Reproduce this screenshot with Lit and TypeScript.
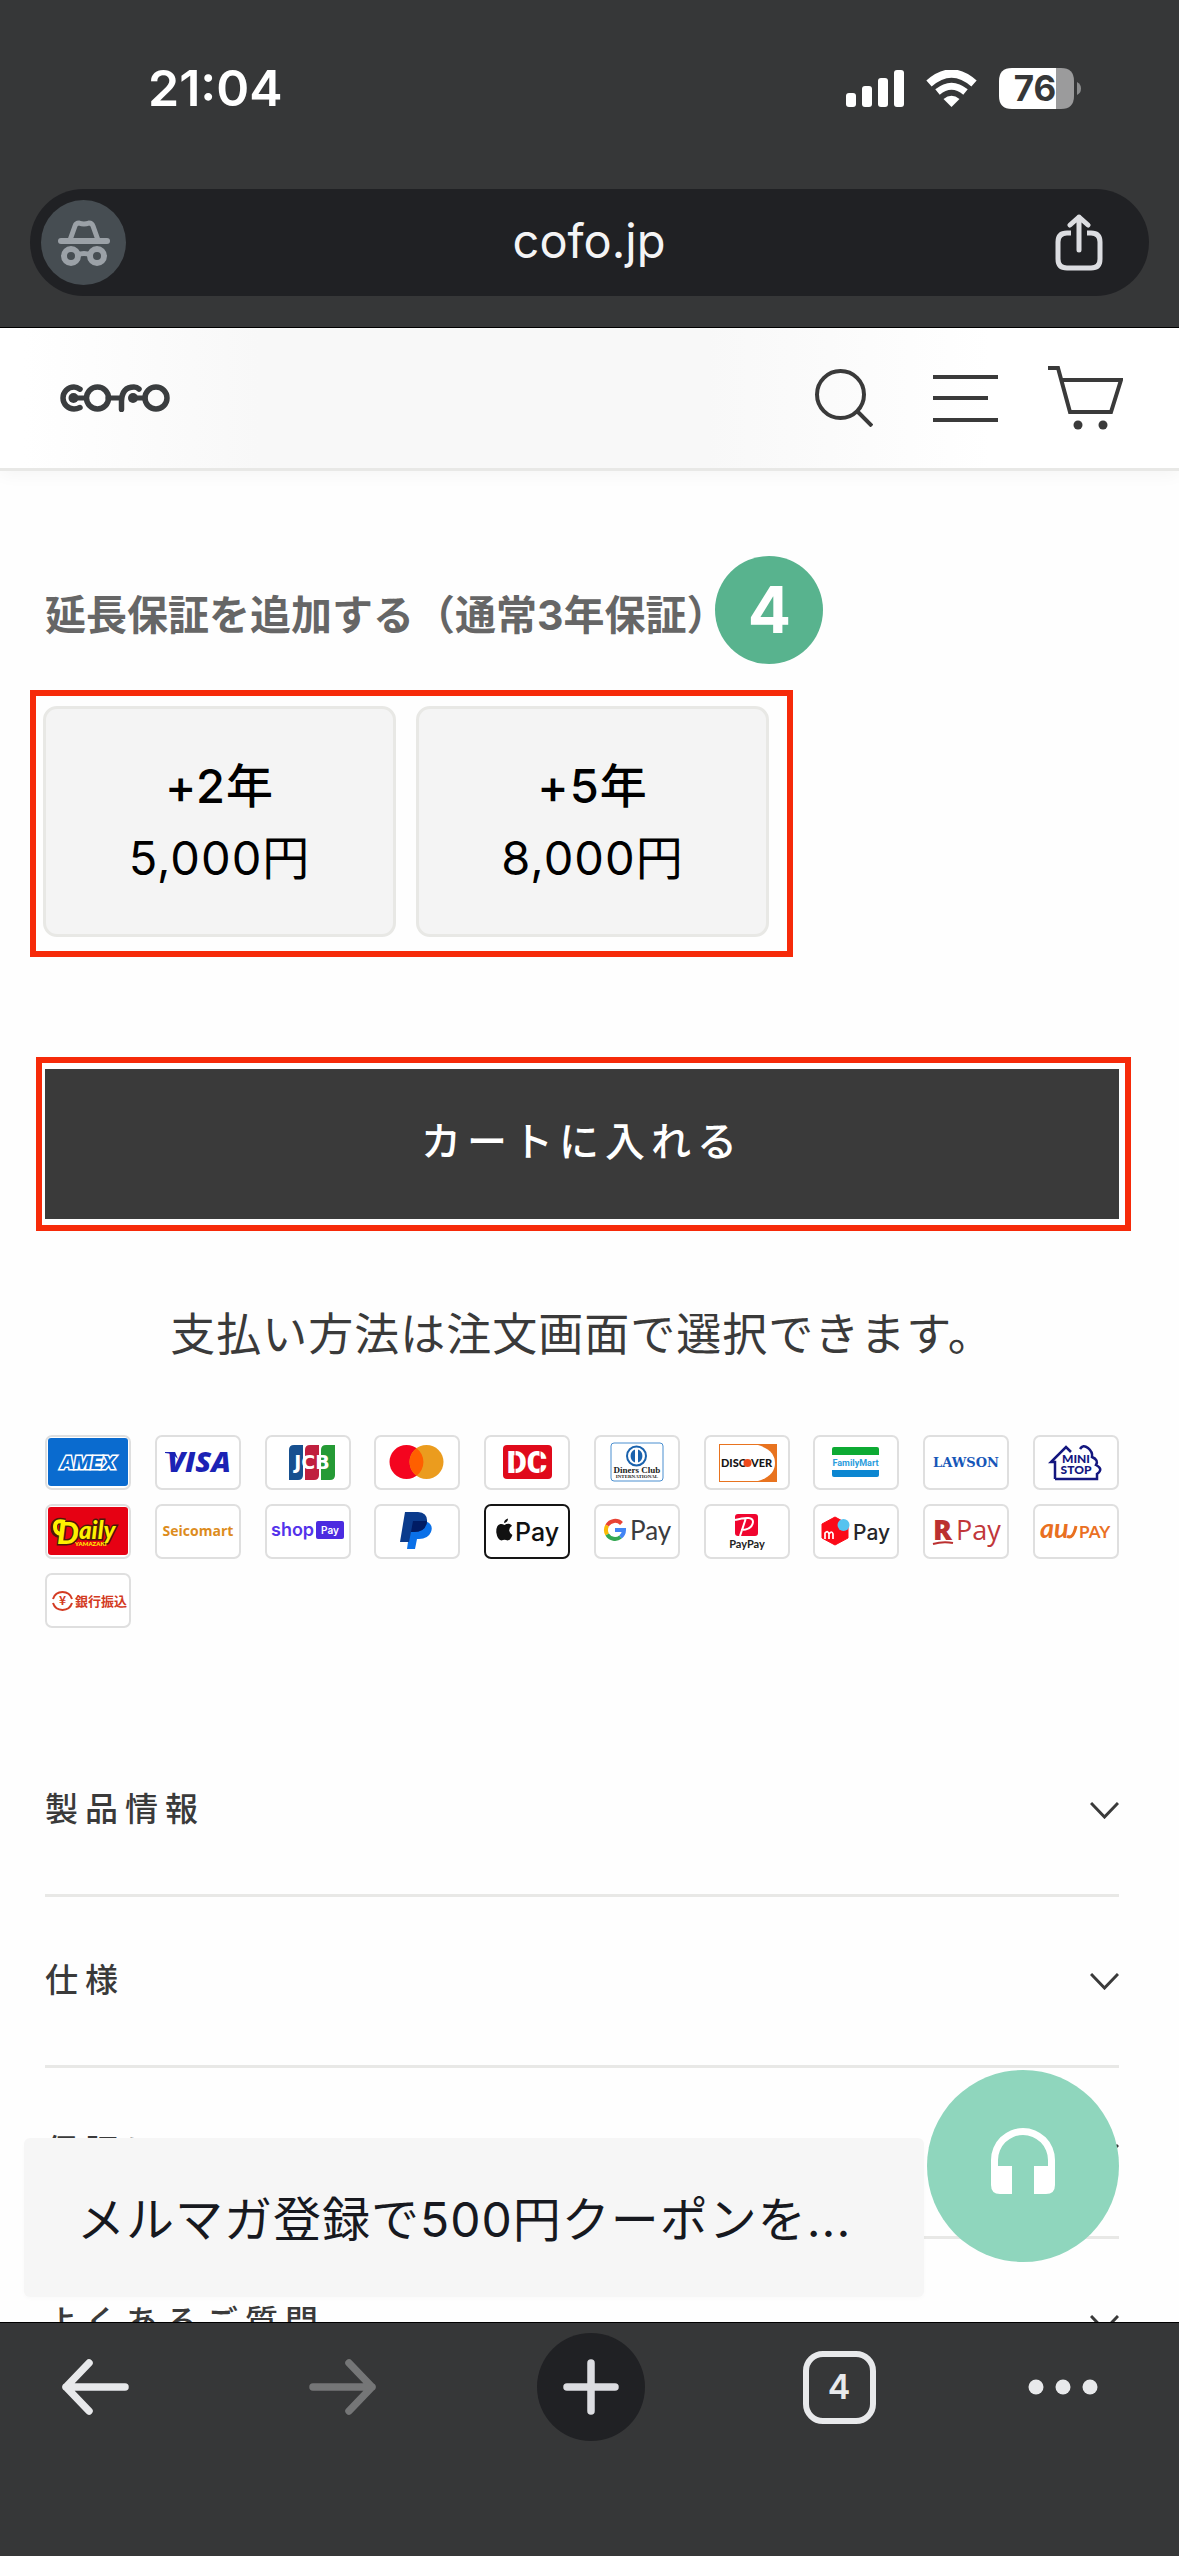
import { LitElement, html, css, svg } from "lit";
import { customElement, property, state } from "lit/decorators.js";
import { classMap } from "lit/directives/class-map.js";

const sans = css`Inter, "Noto Sans CJK JP", sans-serif`;

const logos: { name: string; dark?: boolean; art: unknown }[] = [
  {
    name: "AMEX",
    art: svg`<rect x="3" y="3" width="80" height="48" rx="3" fill="#0a6bcf"/>
      <text x="43" y="34" text-anchor="middle" font-family="Inter" font-weight="800" font-style="italic" font-size="18" fill="#0a6bcf" stroke="#fff" stroke-width="3" paint-order="stroke">AMEX</text>`,
  },
  {
    name: "VISA",
    art: svg`<path d="M10 17H20L23 24Q18 18 10 18Z" fill="#1b22b5"/>
      <text x="44" y="37" text-anchor="middle" font-family="Open Sans" font-weight="800" font-style="italic" font-size="29" fill="#1b22b5">VISA</text>`,
  },
  {
    name: "JCB",
    art: svg`<path d="M29 10H38V40Q38 45 33 45H24V15Q24 10 29 10Z" fill="#17508f"/>
      <path d="M45 10H54V40Q54 45 49 45H40V15Q40 10 45 10Z" fill="#c0203f"/>
      <path d="M61 10H70V40Q70 45 65 45H56V15Q56 10 61 10Z" fill="#259a35"/>
      <text x="47" y="34" text-anchor="middle" font-family="DejaVu Sans" font-weight="700" font-size="19" fill="#fff">JCB</text>`,
  },
  {
    name: "Mastercard",
    art: svg`<circle cx="32.500" cy="27" r="17" fill="#f4041f"/><circle cx="52.500" cy="27" r="17" fill="#eb9c1e"/>
      <path d="M42.500 13.300a17 17 0 0 1 0 27.400a17 17 0 0 1 0-27.400Z" fill="#ff5f00"/>`,
  },
  {
    name: "DC",
    art: svg`<rect x="19" y="10" width="49" height="34" rx="4" fill="#e00a1b"/>
      <text x="43" y="38" text-anchor="middle" font-family="Roboto" font-weight="900" font-size="31" fill="#fff">DC</text>
      <path d="M31 15V39M56 15V39" stroke="#e00a1b" stroke-width="1"/>`,
  },
  {
    name: "Diners Club",
    art: svg`<rect x="17" y="8" width="52" height="38" rx="3" fill="#fff" stroke="#4a8fd0"/>
      <circle cx="42.500" cy="21" r="9.500" fill="#fff" stroke="#1a62ad" stroke-width="2"/>
      <path d="M41 14.500a7 7 0 0 0 0 13ZM44 14.500a7 7 0 0 1 0 13Z" fill="#1a62ad"/>
      <text x="43" y="38" text-anchor="middle" font-family="Liberation Serif" font-weight="700" font-size="9" fill="#222">Diners Club</text>
      <text x="43" y="43" text-anchor="middle" font-family="Liberation Serif" font-weight="700" font-size="5" fill="#222">INTERNATIONAL</text>`,
  },
  {
    name: "DISCOVER",
    art: svg`<rect x="15" y="9" width="58" height="38" fill="#e8731f"/>
      <path d="M16 10H54Q71 15 71 28Q71 41 54 46H16Z" fill="#fff"/>
      <text x="17" y="32" font-family="Lato" font-weight="900" font-size="11" fill="#151515">DISC</text>
      <circle cx="43.500" cy="28" r="4" fill="#ee4a1c"/>
      <text x="47" y="32" font-family="Lato" font-weight="900" font-size="11" fill="#151515">VER</text>`,
  },
  {
    name: "FamilyMart",
    art: svg`<path d="M19 20V14Q19 12 21 12H64Q66 12 66 14V20Z" fill="#0daa33"/>
      <path d="M19 35H66V40Q66 42 64 42H21Q19 42 19 40Z" fill="#0b86d1"/>
      <text x="42.500" y="31" text-anchor="middle" font-family="Roboto" font-weight="700" font-size="9" fill="#2a9ddc">FamilyMart</text>`,
  },
  {
    name: "LAWSON",
    art: svg`<text x="43" y="32" text-anchor="middle" font-family="DejaVu Serif" font-weight="700" font-size="13" fill="#1656b8">LAWSON</text>`,
  },
  {
    name: "MINISTOP",
    art: svg`<path d="M22 44V27H18L33 12L38 17M47 14Q50 9 55 13Q60 17 59 22Q66 25 63 30Q71 34 64 39V44H22" fill="none" stroke="#14177f" stroke-width="2.500"/>
      <text x="43" y="28" text-anchor="middle" font-family="Lato" font-weight="900" font-size="12" fill="#14177f">MINI</text>
      <text x="43" y="39" text-anchor="middle" font-family="Lato" font-weight="900" font-size="12" fill="#14177f">STOP</text>`,
  },
  {
    name: "Daily",
    art: svg`<rect x="3" y="3" width="80" height="48" rx="3" fill="#e60113"/>
      <path d="M20 18Q9 15 9 24Q9 30 16 31" fill="none" stroke="#4b1a08" stroke-width="7"/>
      <text x="12" y="40" font-family="Lato" font-weight="900" font-style="italic" font-size="31" fill="#fff100" stroke="#4b1a08" stroke-width="3" paint-order="stroke">D</text>
      <path d="M20 18Q10 15 10 23Q10 29 16 30" fill="none" stroke="#fff100" stroke-width="4"/>
      <text x="34" y="35" font-family="Lato" font-weight="900" font-style="italic" font-size="24" fill="#fff100" stroke="#4b1a08" stroke-width="3" paint-order="stroke">aily</text>
      <text x="30" y="42" font-family="Lato" font-weight="900" font-size="6" fill="#fff100">YAMAZAKI</text>`,
  },
  {
    name: "Seicomart",
    art: svg`<text x="43" y="32" text-anchor="middle" font-family="Open Sans" font-weight="700" font-size="14" fill="#dd8c1d">Seicomart</text>`,
  },
  {
    name: "shop Pay",
    art: svg`<text x="6" y="32" font-family="Inter" font-weight="600" font-size="18" fill="#5433eb">shop</text>
      <rect x="51" y="17" width="28" height="18" rx="2" fill="#4b2be0"/>
      <text x="65" y="30" text-anchor="middle" font-family="Inter" font-weight="600" font-size="10" fill="#fff">Pay</text>`,
  },
  {
    name: "PayPal",
    art: svg`<path d="M37 17H51Q60 20 57 28Q54 35 45 35H43L41 45H33Z" fill="#0a70e8"/>
      <path d="M31 8H44Q54 9 53 18Q51 28 40 28H37L35 38H26Z" fill="#0b3b8c"/>
      <path d="M39 17H53Q52 28 40 28H37Z" fill="#001c64"/>`,
  },
  {
    name: "Apple Pay",
    dark: true,
    art: svg`<path d="M20.500 21Q22.500 19.600 25 19.800Q27 20.200 28 21.800Q25 23.600 25.200 26.500Q25.500 29.600 28.400 31Q26.600 36.300 23.600 36.500Q22 35.700 20.500 35.700Q19 35.700 17.400 36.500Q13.500 36 12.300 28.500Q12 21 16.500 20Q18.500 19.800 20.500 21ZM20 19Q20 15.500 24 14.500Q24.200 18.300 20 19Z" fill="#111"/>
      <text x="31" y="37" font-family="Inter" font-weight="500" font-size="25" fill="#111">Pay</text>`,
  },
  {
    name: "G Pay",
    art: svg`<g fill="none" stroke-width="4"><path d="M27.500 19.500A9 9 0 0 0 13.200 21.500" stroke="#e84335"/><path d="M13.200 21.500A9 9 0 0 0 13.200 30.500" stroke="#fabb05"/>
      <path d="M13.200 30.500A9 9 0 0 0 26.500 33" stroke="#34a853"/><path d="M26.500 33A9 9 0 0 0 30 26H21" stroke="#4285f4"/></g>
      <text x="36" y="36" font-family="Lato" font-weight="400" font-size="26" fill="#3a3c40">Pay</text>`,
  },
  {
    name: "PayPay",
    art: svg`<rect x="31" y="10" width="23" height="22" rx="3" fill="#f0052f"/>
      <path d="M31 16Q49 11 49 18Q48 26 37 26M42 14L36 32" fill="none" stroke="#fff" stroke-width="2"/>
      <text x="43" y="44" text-anchor="middle" font-family="Lato" font-weight="700" font-size="11" fill="#222">PayPay</text>`,
  },
  {
    name: "Mer Pay",
    art: svg`<path d="M22 13L35 20V34L22 41L9 34V20Z" fill="#fb0a18" stroke="#fb0a18" stroke-linejoin="round"/>
      <circle cx="30.500" cy="21" r="6" fill="#55c3ef"/>
      <path d="M12 35V29Q15 26 16 30V35M16 30Q19 26 20 30V35" fill="none" stroke="#fff" stroke-width="1.700"/>
      <text x="40" y="36" font-family="Inter" font-weight="500" font-size="21" fill="#26272b">Pay</text>`,
  },
  {
    name: "R Pay",
    art: svg`<text x="10" y="36" font-family="Open Sans" font-weight="800" font-size="28" fill="#bb3030">R</text>
      <path d="M10 40Q20 37 30 39" fill="none" stroke="#bb3030" stroke-width="2"/>
      <text x="33" y="36" font-family="Open Sans" font-weight="400" font-size="27" fill="#c1373a">Pay</text>`,
  },
  {
    name: "au PAY",
    art: svg`<text x="7" y="34" font-family="Lato" font-weight="700" font-style="italic" font-size="27" fill="#e9701f">au</text>
      <path d="M34 32Q40 36 43 22" fill="none" stroke="#e9701f" stroke-width="3"/>
      <text x="46" y="34" font-family="Lato" font-weight="700" font-size="17" fill="#ea7023">PAY</text>`,
  },
  {
    name: "銀行振込",
    art: svg`<path d="M8 26A10 10 0 0 1 27 26M27 30A10 10 0 0 1 8 30" fill="none" stroke="#d33a22" stroke-width="2"/>
      <text x="17.500" y="32" text-anchor="middle" font-family="Noto Sans CJK JP" font-weight="700" font-size="12" fill="#d33a22">¥</text>
      <text x="30" y="33" font-family="Noto Sans CJK JP" font-weight="700" font-size="13" fill="#d33a22">銀行振込</text>`,
  },
];

@customElement("status-bar")
class StatusBar extends LitElement {
  static styles = css`
    :host { display: block; font-family: ${sans}; }
    .bar { display: flex; align-items: center; padding: 58px 98px 71px 148px; color: #fff; }
    .time { flex: 1; font-size: 50px; line-height: 60px; font-weight: 600; }
    .icons { display: flex; align-items: center; gap: 22px; }
    svg { display: block; }
  `;
  render() {
    return html`<div class="bar">
      <span class="time">21:04</span>
      <div class="icons">
        <svg width="58" height="37" viewBox="0 0 58 37" fill="#fff" aria-hidden="true">
          <rect y="23" width="10" height="14" rx="3" /><rect x="16" y="16" width="10" height="21" rx="3" />
          <rect x="32" y="8" width="10" height="29" rx="3" /><rect x="48" width="10" height="37" rx="3" />
        </svg>
        <svg width="51" height="37" viewBox="0 0 51 37" aria-hidden="true">
          <path d="M3 13.500Q25.500-6.500 48 13.500" fill="none" stroke="#fff" stroke-width="8" />
          <path d="M11.500 22Q25.500 10.500 39.500 22" fill="none" stroke="#fff" stroke-width="7" />
          <path d="M17.500 29Q25.500 22.500 33.500 29L25.500 37Z" fill="#fff" />
        </svg>
        <svg width="82" height="41" viewBox="0 0 82 41" role="img" aria-label="76%">
          <path d="M57 0H62Q75 0 75 13V28Q75 41 62 41H57Z" fill="#9b9b9c" />
          <path d="M13 0H57V41H13Q0 41 0 28V13Q0 0 13 0Z" fill="#fff" />
          <path d="M78 14Q82 16 82 20.500Q82 25 78 27Z" fill="#8b8c8d" />
          <text x="36" y="33" text-anchor="middle" font-family="Inter" font-size="35" font-weight="700" fill="#363738">76</text>
        </svg>
      </div>
    </div>`;
  }
}

@customElement("address-bar")
class AddressBar extends LitElement {
  static styles = css`
    :host { display: block; padding: 0 30px 31px; font-family: ${sans}; }
    .pill { display: flex; align-items: center; justify-content: space-between; padding: 11px 46px 11px 11px; border-radius: 54px; background: #202124; }
    .incognito { display: flex; align-items: center; justify-content: center; width: 85px; height: 85px; border-radius: 50%; background: #464d52; }
    .url { flex: 1; padding: 0 3px 4px 0; border: 0; background: none; color: #f4f4f5; font: 400 47px/60px ${sans}; text-align: center; min-width: 0; outline: 0; }
    .share { padding: 0; border: 0; background: none; }
    svg { display: block; }
  `;
  render() {
    return html`<div class="pill">
      <span class="incognito">
        <svg width="52" height="46" viewBox="0 0 52 46" fill="none" stroke="#9ba1a7" aria-hidden="true">
          <path d="M3 21H49" stroke-width="6" stroke-linecap="round" />
          <path d="M12 20L17 6Q18 3 21 3Q26 5 31 3Q34 3 35 6L40 20" stroke-width="5" />
          <circle cx="13" cy="36" r="7" stroke-width="6" /><circle cx="39" cy="36" r="7" stroke-width="6" />
          <path d="M19 35Q26 32 33 35" stroke-width="5" />
        </svg>
      </span>
      <input class="url" aria-label="アドレス" value="cofo.jp" />
      <button class="share" aria-label="共有">
        <svg width="48" height="57" viewBox="0 0 48 57" fill="none" stroke="#dcdde1" stroke-width="5" stroke-linecap="round" stroke-linejoin="round">
          <path d="M24 36V3M15 11L24 3L33 11" />
          <path d="M16 19H12Q3 19 3 28V45Q3 54 12 54H36Q45 54 45 45V28Q45 19 36 19H32" stroke-linecap="butt" />
        </svg>
      </button>
    </div>`;
  }
}

@customElement("shop-header")
class ShopHeader extends LitElement {
  static styles = css`
    :host { display: block; }
    .bar { display: flex; align-items: center; justify-content: space-between; height: 140px; padding: 0 56px 0 60px; border-bottom: 3px solid #e8e8e6; background: linear-gradient(90deg, #fff 2%, #f8f8f8 22%, #f8f8f8 60%, #fff 84%); box-shadow: 0 4px 16px rgba(0, 0, 0, 0.04); }
    .tools { display: flex; align-items: center; gap: 50px; }
    .tool { padding: 0; border: 0; background: none; }
    .menu { margin-left: 10px; }
    svg { display: block; }
  `;
  render() {
    return html`<header class="bar">
      <a href="#top" aria-label="COFO">
        <svg width="110" height="28" viewBox="0 0 110 28" fill="none" stroke="#3a3d3f" stroke-width="5.500" stroke-linecap="round">
          <path d="M20 5.200Q17 3 14 3A11 11 0 0 0 14 25Q17 25 20 23.500" />
          <path d="M14 14H26M48 14H60M73 14H85" stroke-width="5" />
          <path d="M61.500 25.500V17Q62 3 74 3Q77 3 79 5" />
          <circle cx="13.500" cy="14" r="5" fill="#3a3d3f" stroke="none" /><circle cx="73" cy="14" r="5" fill="#3a3d3f" stroke="none" />
          <circle cx="37.500" cy="14" r="11" /><circle cx="96" cy="14" r="11" />
        </svg>
      </a>
      <div class="tools">
        <button class="tool" aria-label="検索">
          <svg width="58" height="58" viewBox="0 0 58 58" fill="none" stroke="#3a3a3a" stroke-width="4"><circle cx="25.500" cy="25.500" r="23.500" /><path d="M42 42L57 57" /></svg>
        </button>
        <button class="tool menu" aria-label="メニュー">
          <svg width="65" height="48" viewBox="0 0 65 48" stroke="#3a3a3a" stroke-width="4"><path d="M0 3H65M0 24H55M0 46H65" /></svg>
        </button>
        <button class="tool" aria-label="カート">
          <svg width="75" height="64" viewBox="0 0 75 64" fill="none" stroke="#3a3a3a" stroke-width="4"><path d="M0 2H10L22 46H63L73 14H14" /><circle cx="30" cy="59" r="4.500" fill="#3a3a3a" stroke="none" /><circle cx="55" cy="59" r="4.500" fill="#3a3a3a" stroke="none" /></svg>
        </button>
      </div>
    </header>`;
  }
}

@customElement("payment-grid")
class PaymentGrid extends LitElement {
  static styles = css`
    :host { display: block; }
    .grid { display: grid; grid-template-columns: repeat(10, 86px); justify-content: space-between; gap: 14px 0; margin: 0; padding: 0; list-style: none; }
    .card { height: 55px; }
    .frame { fill: #fff; stroke: #dfdfdf; stroke-width: 2; }
    .dark .frame { stroke: #151515; }
    svg { display: block; }
  `;
  render() {
    return html`<ul class="grid">
      ${logos.map((l) => html`<li class=${classMap({ card: true, dark: !!l.dark })}>
        <svg width="86" height="55" viewBox="0 0 86 55" role="img" aria-label=${l.name}>
          <rect class="frame" x="1" y="1" width="84" height="53" rx="6" />${l.art}
        </svg>
      </li>`)}
    </ul>`;
  }
}

@customElement("info-row")
class InfoRow extends LitElement {
  @property() label = "";
  @state() private open = false;
  static styles = css`
    :host { display: block; border-bottom: 3px solid #e8e8e6; }
    .row { display: flex; align-items: center; justify-content: space-between; width: 100%; height: 168px; padding: 0; border: 0; background: none; color: #3a3a3a; font: 500 33px/48px ${sans}; letter-spacing: 7px; text-align: left; }
    .label { padding-bottom: 3px; }
    .open { transform: rotate(180deg); }
    svg { display: block; }
  `;
  render() {
    return html`<button class="row" aria-expanded=${this.open} @click=${() => (this.open = !this.open)}>
      <span class="label">${this.label}</span>
      <svg class=${classMap({ open: this.open })} width="29" height="17" viewBox="0 0 29 17" fill="none" stroke="#3a3a3a" stroke-width="3"><path d="M1 1L14.500 15L28 1" /></svg>
    </button>`;
  }
}

@customElement("browser-toolbar")
class BrowserToolbar extends LitElement {
  static styles = css`
    :host { display: block; background: #363738; border-top: 1px solid #000; font-family: ${sans}; }
    .bar { display: flex; align-items: center; justify-content: space-between; padding: 10px 86px 115px 41px; }
    .item { display: flex; align-items: center; justify-content: center; width: 108px; height: 108px; padding: 0; border: 0; border-radius: 50%; background: none; }
    .new { background: #202124; }
    .more { width: 60px; }
    svg { flex: none; }
    .tabs { display: flex; align-items: center; justify-content: center; box-sizing: border-box; width: 73px; height: 73px; border: 6px solid #e8e9eb; border-radius: 20px; color: #e8e9eb; font: 600 34px/40px ${sans}; }
  `;
  render() {
    return html`<nav class="bar">
      <button class="item" aria-label="戻る"><svg width="68" height="56" viewBox="0 0 68 56" fill="none" stroke="#e8e9eb" stroke-width="7.500" stroke-linecap="round" stroke-linejoin="round"><path d="M64 28H5M28 4L5 28L28 52" /></svg></button>
      <button class="item" aria-label="進む" disabled><svg width="68" height="56" viewBox="0 0 68 56" fill="none" stroke="#757677" stroke-width="7.500" stroke-linecap="round" stroke-linejoin="round"><path d="M4 28H63M40 4L63 28L40 52" /></svg></button>
      <button class="item new" aria-label="新しいタブ"><svg width="56" height="56" viewBox="0 0 56 56" stroke="#dcdde1" stroke-width="7.500" stroke-linecap="round"><path d="M28 4V52M4 28H52" /></svg></button>
      <button class="item" aria-label="タブ一覧"><span class="tabs">4</span></button>
      <button class="item more" aria-label="その他"><svg width="70" height="16" viewBox="0 0 70 16" fill="#e8e9eb"><circle cx="8" cy="8" r="7.500" /><circle cx="35" cy="8" r="7.500" /><circle cx="62" cy="8" r="7.500" /></svg></button>
    </nav>`;
  }
}

@customElement("app-root")
class AppRoot extends LitElement {
  static styles = css`
    :host { display: block; font-family: ${sans}; }
    .screen { display: flex; flex-direction: column; height: 100vh; overflow: hidden; background: #363738; }
    .page { position: relative; flex: 1; min-height: 0; overflow: hidden; border-top: 1px solid #000; background: #fefefe; }
    .content { padding: 85px 60px 0 45px; color: #3a3a3a; }
    .heading { display: flex; align-items: center; }
    .title { margin: 0; padding-top: 10px; color: #666; font-size: 41px; line-height: 60px; font-weight: 700; white-space: nowrap; }
    .badge { display: flex; align-items: center; justify-content: center; width: 108px; height: 108px; margin-left: -12px; border-radius: 50%; background: #58b38e; color: #fff; font-size: 64px; line-height: 64px; font-weight: 700; }
    .marked { border: 6px solid #f62a09; }
    .options { display: flex; gap: 20px; width: fit-content; margin: 26px 0 0 -15px; padding: 10px 18px 14px 7px; }
    .option { box-sizing: border-box; width: 353px; height: 231px; padding: 0; border: 3px solid #e8e8e5; border-radius: 14px; background: #f4f4f4; color: #000; font: 400 47px/72px ${sans}; letter-spacing: 1px; }
    .years { display: block; font-weight: 500; }
    .price { display: block; }
    .buy { margin: 100px -12px 0 -9px; padding: 6px 6px 6px 3px; }
    .cart { display: block; width: 100%; height: 150px; padding: 0 0 4px; border: 0; background: #3a3a3a; color: #fff; font: 500 40px/60px ${sans}; letter-spacing: 6px; }
    .note { margin: 74px 0 70px; font-size: 45px; line-height: 60px; letter-spacing: 1px; text-align: center; }
    .info { margin-top: 98px; }
    .coupon { position: absolute; left: 24px; right: 255px; bottom: 25px; box-sizing: border-box; height: 159px; padding: 0 53px; border-radius: 6px; background: #f6f6f6; color: #17191f; font-size: 48px; line-height: 164px; letter-spacing: 1px; text-decoration: none; white-space: nowrap; overflow: hidden; box-shadow: 0 2px 4px rgba(0, 0, 0, 0.02); }
    .chat { position: absolute; right: 60px; bottom: 60px; display: flex; align-items: center; justify-content: center; width: 192px; height: 192px; padding: 0 0 10px; box-sizing: border-box; border: 0; border-radius: 50%; background: #8fd6bd; }
  `;
  render() {
    return html`<div class="screen">
      <status-bar></status-bar>
      <address-bar></address-bar>
      <div class="page">
        <shop-header></shop-header>
        <main class="content">
          <div class="heading"><h2 class="title">延長保証を追加する（通常3年保証）</h2><span class="badge">4</span></div>
          <div class="options marked">
            ${[["+2年", "5,000円"], ["+5年", "8,000円"]].map(([y, p]) => html`<button class="option"><span class="years">${y}</span><span class="price">${p}</span></button>`)}
          </div>
          <div class="buy marked"><button class="cart">カートに入れる</button></div>
          <p class="note">支払い方法は注文画面で選択できます。</p>
          <payment-grid></payment-grid>
          <div class="info">
            ${["製品情報", "仕様", "保証について", "よくあるご質問"].map((t) => html`<info-row label=${t}></info-row>`)}
          </div>
        </main>
        <a class="coupon" href="#coupon">メルマガ登録で500円クーポンを...</a>
        <button class="chat" aria-label="サポート">
          <svg width="64" height="66" viewBox="0 0 64 66" fill="#fff"><path d="M0 32a32 32 0 0 1 64 0V57Q64 66 55 66H43V38H57V32a25 25 0 0 0-50 0V38H21V66H9Q0 66 0 57Z" /></svg>
        </button>
      </div>
      <browser-toolbar></browser-toolbar>
    </div>`;
  }
}
